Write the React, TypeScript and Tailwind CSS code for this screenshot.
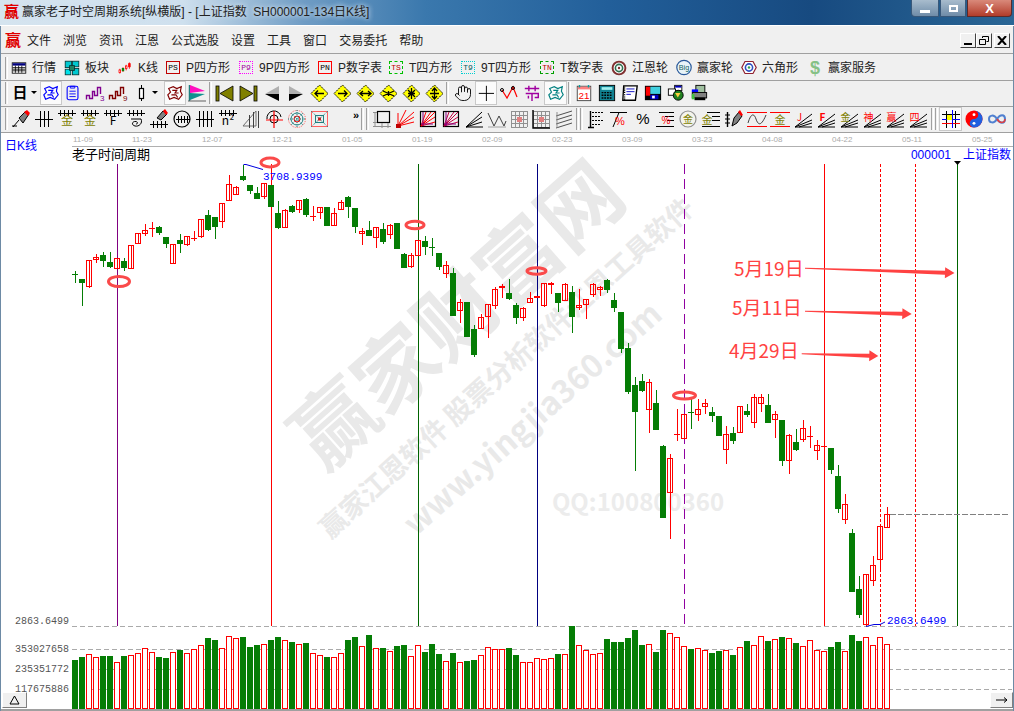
import type { ReactNode } from "react";
import { Hand } from "lucide-react";

const cjk = "Noto Sans CJK SC, sans-serif";

// [colour, wick top, body top, body bottom, wick bottom] in page y, x = 75 + 7i
type Candle = [string, number, number, number, number];
const candles: Candle[] = [
  ["g", 271, 274, 274, 283], ["g", 279, 279, 282, 306], ["r", 260, 260, 286, 288], ["r", 254, 257, 259, 263],
  ["g", 252, 255, 260, 267], ["g", 252, 262, 266, 268], ["r", 258, 258, 268, 268], ["g", 258, 261, 267, 271],
  ["r", 245, 245, 268, 269], ["r", 233, 233, 243, 244], ["r", 224, 230, 233, 236], ["r", 222, 228, 228, 237],
  ["g", 226, 227, 232, 235], ["g", 237, 237, 243, 248], ["r", 244, 244, 263, 264], ["g", 234, 240, 243, 253],
  ["r", 236, 236, 244, 246], ["r", 231, 238, 238, 241], ["r", 219, 219, 236, 238], ["g", 210, 215, 229, 231],
  ["g", 217, 217, 226, 239], ["r", 203, 203, 221, 228], ["r", 175, 184, 200, 201], ["r", 186, 187, 194, 195],
  ["g", 165, 176, 179, 181], ["g", 185, 185, 190, 194], ["g", 187, 193, 198, 199], ["r", 183, 183, 196, 199],
  ["g", 185, 185, 206, 206], ["g", 201, 213, 227, 229], ["r", 209, 210, 227, 228], ["g", 205, 206, 211, 213],
  ["r", 200, 200, 209, 213], ["g", 198, 199, 214, 217], ["r", 206, 216, 216, 221], ["r", 207, 207, 212, 219],
  ["g", 207, 207, 225, 226], ["r", 208, 213, 225, 226], ["r", 200, 202, 209, 210], ["g", 196, 197, 206, 218],
  ["g", 208, 208, 226, 233], ["r", 228, 231, 233, 245], ["g", 221, 230, 235, 236], ["r", 227, 227, 237, 248],
  ["g", 223, 229, 241, 244], ["r", 224, 225, 234, 239], ["g", 223, 223, 248, 248], ["g", 253, 254, 267, 268],
  ["r", 253, 255, 266, 268], ["r", 240, 240, 255, 255], ["g", 236, 241, 246, 255], ["g", 238, 247, 247, 256],
  ["g", 253, 253, 266, 270], ["r", 261, 265, 273, 278], ["g", 268, 273, 315, 315], ["r", 299, 302, 310, 323],
  ["g", 302, 302, 336, 337], ["g", 325, 329, 354, 357], ["r", 314, 317, 328, 328], ["r", 304, 304, 316, 338],
  ["r", 287, 289, 305, 309], ["r", 284, 286, 287, 298], ["g", 279, 293, 298, 300], ["g", 303, 305, 317, 324],
  ["r", 307, 308, 317, 321], ["r", 292, 298, 302, 303], ["r", 297, 296, 297, 297], ["r", 283, 283, 305, 307],
  ["r", 282, 283, 284, 294], ["g", 293, 293, 302, 312], ["r", 283, 284, 300, 300], ["g", 286, 292, 316, 333],
  ["r", 289, 305, 307, 310], ["r", 299, 299, 304, 319], ["r", 283, 284, 294, 297], ["r", 286, 287, 289, 296],
  ["g", 279, 280, 289, 293], ["g", 293, 300, 307, 312], ["g", 312, 312, 348, 353], ["g", 343, 348, 391, 394],
  ["g", 377, 385, 411, 471], ["g", 374, 381, 390, 392], ["r", 379, 382, 409, 433], ["g", 390, 403, 429, 429],
  ["g", 445, 446, 517, 517], ["r", 454, 458, 492, 539], ["r", 409, 434, 434, 441], ["r", 414, 414, 438, 438],
  ["g", 399, 412, 412, 429], ["r", 399, 409, 414, 421], ["r", 399, 403, 406, 414], ["g", 407, 412, 415, 422],
  ["g", 416, 416, 435, 436], ["r", 426, 434, 449, 464], ["g", 427, 433, 440, 444], ["r", 406, 406, 432, 432],
  ["g", 404, 411, 414, 417], ["r", 394, 397, 422, 428], ["r", 394, 397, 403, 412], ["g", 394, 405, 422, 422],
  ["r", 411, 414, 419, 438], ["g", 420, 420, 460, 466], ["r", 434, 435, 460, 474], ["g", 429, 442, 449, 451],
  ["r", 420, 428, 439, 442], ["r", 426, 436, 436, 448], ["r", 440, 445, 450, 460], ["r", 446, 446, 446, 446],
  ["g", 448, 448, 469, 474], ["g", 465, 476, 508, 513], ["r", 494, 504, 519, 524], ["g", 529, 533, 591, 591],
  ["g", 576, 589, 614, 618], ["r", 574, 574, 624, 626], ["r", 556, 565, 580, 586], ["r", 526, 526, 559, 569],
  ["r", 507, 514, 527, 528],
];

const volumes: [string, number][] = (
  "g660 g657 r654 r657 g656 g656 r662 g656 r655 r653 r648 r652 g657 g658 r652 g650 r653 r649 r645 g638 " +
  "g640 r648 r636 r638 g637 g647 g645 r644 g640 g637 r640 g642 r644 g643 r653 r655 g657 r657 r653 g640 " +
  "g637 r646 g635 r648 g648 r651 g646 g645 r656 r645 g652 g644 g654 r661 g653 r662 g661 g660 r655 r647 " +
  "r649 r649 g648 g655 r662 r662 r658 r659 r658 g654 r654 g626 r645 r650 r654 r653 g639 g642 g642 g638 " +
  "g630 g645 r644 g652 g630 r633 r637 r646 g649 r648 r650 g653 g651 r650 g655 r647 g641 r645 r636 g641 " +
  "r639 g637 r638 g643 r646 r640 r650 r651 g647 g642 r651 g635 g641 r637 r645 r637 r644"
)
  .split(" ")
  .map((v) => [v[0], Number(v.slice(1))]);

const GREEN = "#057d05";
const RED = "#ff0000";

function arrow(x1: number, y1: number, bx: number, by: number, tx: number, ty: number) {
  const len = Math.hypot(tx - x1, ty - y1);
  const nx = -(ty - y1) / len;
  const ny = (tx - x1) / len;
  const p = (x: number, y: number, d: number) => `${x + nx * d},${y + ny * d}`;
  return [p(x1, y1, 0.5), p(bx, by, 2), p(bx, by, 5.5), `${tx},${ty}`, p(bx, by, -5.5), p(bx, by, -2), p(x1, y1, -0.5)].join(" ");
}

const Ic = ({ children, size = 20 }: { children: ReactNode; size?: number }) => (
  <svg width={size} height={size} viewBox="0 0 20 20" fill="none" strokeWidth="1">
    {children}
  </svg>
);

// one toolbar cell
const S = ({ children, className = "w-[23px]" }: { children?: ReactNode; className?: string }) => (
  <div className={`h-[24px] shrink-0 flex items-center justify-center ${className}`}>{children}</div>
);

const Sel = ({ children, className = "w-[23px]" }: { children?: ReactNode; className?: string }) => (
  <div className={`h-[24px] shrink-0 flex items-center justify-center bg-[#fbfbfb] border border-[#c9c9c9] ${className}`}>{children}</div>
);

const Grip = ({ className = "" }: { className?: string }) => (
  <div className={`w-[3px] h-[22px] shrink-0 border-l border-l-[#a0a0a0] border-r border-r-white ${className}`} />
);

const Caret = () => <div className="w-0 h-0 border-x-[3px] border-x-transparent border-t-[3px] border-t-black" />;

// --- row one icons
const TableIcon = () => (
  <Ic size={18}>
    <rect x="1.5" y="3.5" width="17" height="13" fill="#fff" stroke="#000" />
    <rect x="2" y="4" width="16" height="3" fill="#000080" />
    <path d="M2 9.5H18M2 11.5H18M2 13.5H18M5.5 7V16M9.5 7V16M13.5 7V16" stroke="#000" />
  </Ic>
);
const BlocksIcon = () => (
  <Ic size={18}>
    <rect x="1.5" y="1.5" width="8" height="8" fill="#00c8d0" stroke="#003030" />
    <rect x="10.5" y="1.5" width="8" height="7" fill="#00c8d0" stroke="#003030" />
    <rect x="1.5" y="11.5" width="7" height="7" fill="#00e0e8" stroke="#003030" />
    <rect x="10.5" y="10.5" width="8" height="8" fill="#00c8d0" stroke="#003030" />
    <rect x="7" y="7" width="6" height="6" fill="#208060" stroke="#003030" />
  </Ic>
);
const KIcon = () => (
  <Ic size={18}>
    <path d="M3.5 11V17M7.5 9V15M11.5 6V13M15.5 3V11" stroke="#ff0000" />
    <rect x="2.5" y="12.5" width="2" height="3" fill="#fff" stroke="#ff0000" />
    <rect x="6.5" y="10.5" width="2" height="3" fill="#008000" stroke="#008000" />
    <rect x="10.5" y="7.5" width="2" height="3" fill="#fff" stroke="#ff0000" />
    <rect x="14.5" y="4.5" width="2" height="4" fill="#ff0000" stroke="#ff0000" />
  </Ic>
);
const TagIcon = ({ label, border, text }: { label: string; border: string; text: string }) => (
  <div className={`w-[14px] h-[13px] shrink-0 flex items-center justify-center border text-[8px] leading-none font-['Liberation_Mono',monospace] ${border} ${text}`}>
    {label}
  </div>
);
const WheelIcon = () => (
  <Ic size={16}>
    <circle cx="10" cy="10" r="8" fill="#fff" stroke="#803030" strokeWidth="2.4" />
    <circle cx="10" cy="10" r="4.5" stroke="#307050" strokeWidth="2" />
    <circle cx="10" cy="10" r="1.5" fill="#803030" />
  </Ic>
);
const BigIcon = () => (
  <svg width="17" height="17" viewBox="0 0 20 20" fill="none">
    <circle cx="10" cy="10" r="9" fill="#e8f4f8" stroke="#28589a" strokeWidth="1.5" />
    <text x="10" y="13" textAnchor="middle" fontSize="9" fill="#106060" fontFamily="Liberation Sans">
      Big
    </text>
  </svg>
);
const HexIcon = () => (
  <Ic size={17}>
    <polygon points="5,2.5 15,2.5 19,10 15,17.5 5,17.5 1,10" fill="#fff" stroke="#902030" strokeWidth="1.5" />
    <circle cx="10" cy="10" r="4.5" stroke="#3050c0" strokeWidth="2" />
    <circle cx="10" cy="10" r="1.5" fill="#30a050" />
  </Ic>
);

// --- row two icons
const MapIcon = ({ color }: { color: string }) => (
  <Ic size={18}>
    <path d="M3 5L8 3L12 5L17 3L16 8L18 12L14 17L9 15L4 17L2 12L5 9Z M7 7H12L10 10H14M6 12H11L13 15" stroke={color} strokeWidth="1.3" />
  </Ic>
);
const ClipIcon = () => (
  <Ic size={18}>
    <rect x="3.5" y="2.5" width="12" height="15" rx="2" stroke="#0000ff" strokeWidth="1.2" />
    <path d="M7 2.5H12V4.5H7ZM6 8H13M6 11H13M6 14H13" stroke="#0000ff" />
  </Ic>
);
const StepIcon = ({ color, n }: { color: string; n: string }) => (
  <svg width="20" height="20" viewBox="0 0 20 20" fill="none">
    <path d="M1.5 16.5V12.5H4.5V15.5H7.5V8.5H9.5V12.5H12.5V4.5H15.5V11" stroke={color} strokeWidth="1.4" />
    <text x="15" y="18" fontSize="8" fill={color} fontFamily="Liberation Sans">
      {n}
    </text>
  </svg>
);
const CandleIcon = () => (
  <Ic>
    <path d="M10.5 2V18" stroke="#000" />
    <rect x="8.5" y="5.5" width="4" height="10" fill="#fff" stroke="#000" strokeWidth="1.2" />
  </Ic>
);
const FlagIcon = () => (
  <Ic>
    <path d="M2.5 2V18" stroke="#208080" strokeWidth="1.5" />
    <polygon points="3,2 18,8 3,10" fill="#ff10c0" />
    <polygon points="3,10 18,11 3,17" fill="#109090" />
    <path d="M1 18H19" stroke="#606060" />
  </Ic>
);
const FirstIcon = ({ flip }: { flip?: boolean }) => (
  <Ic>
    <g transform={flip ? "matrix(-1 0 0 1 20 0)" : undefined}>
      <rect x="1" y="3" width="3" height="15" fill="#808000" stroke="#000" strokeWidth="0.8" />
      <polygon points="18,3 18,18 5,10.5" fill="#808000" stroke="#000" strokeWidth="0.8" />
    </g>
  </Ic>
);
const PlayIcon = ({ flip }: { flip?: boolean }) => (
  <Ic>
    <g transform={flip ? "matrix(-1 0 0 1 20 0)" : undefined}>
      <polygon points="17,3 17,11 3,11" fill="#b0b0b0" />
      <polygon points="17,18 17,11 3,11" fill="#000" />
    </g>
  </Ic>
);
const Diamond = ({ d }: { d: string }) => (
  <Ic>
    <polygon points="10.5,2 19,10.5 10.5,19 2,10.5" fill="#ffff00" stroke="#000" strokeDasharray="2 1" />
    <path d={d} stroke="#000" strokeWidth="1.3" />
  </Ic>
);
const diamonds = [
  "M6 10.5H15M9 7.5L6 10.5L9 13.5",
  "M6 10.5H15M12 7.5L15 10.5L12 13.5",
  "M5 10.5H16M8 8L5 10.5L8 13M13 8L16 10.5L13 13",
  "M5 8L16 13M5 13L16 8M10.5 8V13",
  "M10.5 5V16M7 10.5H14M7 7L14 14M14 7L7 14",
  "M10.5 5V16M8 8L10.5 5L13 8M8 13L10.5 16L13 13M6 10.5H15",
];
const VIcon = () => (
  <Ic>
    <path d="M3 7L8 15L14 4L18 14" stroke="#ff0000" strokeWidth="1.2" />
    <circle cx="3" cy="7" r="1.5" stroke="#000" />
    <circle cx="14" cy="5" r="1.5" stroke="#000" />
  </Ic>
);
const JieIcon = () => (
  <Ic size={18}>
    <path d="M2 5H18M6.5 2V8M13.5 2V8M3 10.5H17V15H13M10 10.5V19M6 13V16" stroke="#a000a0" strokeWidth="1.6" />
  </Ic>
);
const CalIcon = () => (
  <svg width="18" height="18" viewBox="0 0 20 20" fill="none">
    <rect x="2.5" y="2.5" width="15" height="16" fill="#fff" stroke="#404040" />
    <rect x="3" y="3" width="14" height="3" fill="#ff8080" />
    <path d="M5 1V4M15 1V4" stroke="#00a0a0" strokeWidth="1.5" />
    <text x="10" y="16.5" textAnchor="middle" fontSize="11" fill="#ff0000" fontFamily="Liberation Sans">
      21
    </text>
  </svg>
);
const CalcIcon = () => (
  <Ic size={18}>
    <rect x="1.5" y="1.5" width="17" height="17" fill="#108090" stroke="#000" />
    <rect x="4" y="3.5" width="12" height="3" fill="#a0f0f0" />
    <path d="M4 9.5H16M4 12.5H16M4 15.5H16" stroke="#000" strokeWidth="1.5" strokeDasharray="2 1" />
  </Ic>
);
const DocIcon = () => (
  <Ic size={18}>
    <polygon points="3,2 18,2 16,18 2,18" fill="#fff" stroke="#000" strokeWidth="1.5" />
    <path d="M6 5.5H15M6 8.5H15M6 11.5H11" stroke="#0000c0" />
    <path d="M4 3V18" stroke="#000" strokeDasharray="1 1" strokeWidth="1.5" />
  </Ic>
);
const SaveIcon = () => (
  <Ic size={18}>
    <rect x="1" y="2" width="18" height="16" fill="#000" />
    <rect x="2" y="3" width="5" height="10" fill="#ff0000" />
    <rect x="7" y="3" width="11" height="8" fill="#40d0e0" />
    <rect x="7" y="12" width="9" height="5" fill="#0000c0" />
    <rect x="9" y="13" width="3" height="3" fill="#fff" />
  </Ic>
);
const GlobeIcon = () => (
  <Ic size={18}>
    <rect x="8.5" y="1.5" width="8" height="6" fill="#fff" stroke="#000" />
    <rect x="9" y="2" width="7" height="2" fill="#0000c0" />
    <rect x="1.5" y="5.5" width="8" height="7" fill="#fff" stroke="#000" />
    <circle cx="12.5" cy="12.5" r="5.5" fill="#208020" stroke="#000" />
    <path d="M9 10H15L12 15Z" fill="#ffd040" />
  </Ic>
);
const PrinterIcon = () => (
  <Ic size={18}>
    <rect x="6.5" y="1.5" width="10" height="9" fill="#a0c0a0" stroke="#000" />
    <rect x="2" y="6" width="7" height="3" fill="#0000ff" />
    <rect x="2.5" y="9.5" width="16" height="6" fill="#808080" stroke="#000" />
    <rect x="5" y="15" width="12" height="3" fill="#000" />
    <rect x="2" y="11" width="3" height="6" fill="#40c040" />
  </Ic>
);

// --- row three icons
const PencilIcon = () => (
  <Ic>
    <polygon points="8,9 15,2 18,5 12,14" fill="#808080" stroke="#000" />
    <polygon points="13,3 16,1 19,4 17,7" fill="#ff0000" />
    <path d="M2 18L8 11M1 17H6" stroke="#000" />
  </Ic>
);
const Comb = ({ n = 3, y = 10, h = 8 }: { n?: number; y?: number; h?: number }) => {
  const xs = Array.from({ length: n }, (_, i) => 10 - ((n - 1) * 4) / 2 + i * 4);
  return <path d={`M1 ${y + 0.5}H19 ${xs.map((x) => `M${x + 0.5} ${y - h}V${y + h}`).join(" ")}`} stroke="#000" />;
};
const CombLabel = ({ label, color = "#000", size = 10 }: { label: string; color?: string; size?: number }) => (
  <svg width="20" height="20" viewBox="0 0 20 20" fill="none" strokeWidth="1">
    <path d="M1 4.5H19M3.5 1V7M7.5 1V7M11.5 1V7M15.5 1V7" stroke="#000" />
    <text x="10" y="16" textAnchor="middle" fontSize={size} fill={color} fontFamily={cjk}>
      {label}
    </text>
  </svg>
);
const SpiralIcon = () => (
  <Ic>
    <path d="M1 4.5H19M3.5 1V7M7.5 1V7M11.5 1V7M15.5 1V7" stroke="#000" />
    <path d="M5 10H15C17 14 13 18 9 17C5 16 6 12 10 12.5C12 13 12 15 10 15" stroke="#000" />
  </Ic>
);
const PencilComb = () => (
  <Ic>
    <polygon points="8,9 14,2 18,5 12,11" fill="#808080" stroke="#000" />
    <polygon points="14,2 16,0 19,4 17,6" fill="#ff0000" />
    <path d="M1 15.5H19M4.5 12V19M8.5 12V19M12.5 12V19M16.5 12V19" stroke="#000" />
  </Ic>
);
const CircleComb = () => (
  <Ic>
    <circle cx="10" cy="10" r="8" stroke="#000" strokeWidth="1.2" />
    <path d="M4 10.5H18M6.5 7V14M9.5 7V14M12.5 7V14M15.5 7V14" stroke="#000" />
  </Ic>
);
const TriLines = () => (
  <Ic>
    <polygon points="2,17 15,2 15,17" stroke="#707070" />
    <path d="M8.5 6V19M12.5 3V19M17.5 2V19" stroke="#404040" />
  </Ic>
);
const Target = () => (
  <Ic>
    <circle cx="10" cy="10" r="4" stroke="#000" />
    <path d="M3 10A7 7 0 0 1 17 8" stroke="#000" />
    <path d="M10 2V19M2 11H19" stroke="#ff0000" strokeWidth="1.2" />
  </Ic>
);
const Web = () => (
  <Ic>
    <circle cx="10" cy="10" r="3" stroke="#ff0000" />
    <circle cx="10" cy="10" r="6" stroke="#208080" />
    <circle cx="10" cy="10" r="8.5" stroke="#ff6060" strokeDasharray="1 1" />
    <path d="M1 10H19M10 1V19M4 4L16 16M16 4L4 16" stroke="#208080" strokeDasharray="1 1" />
  </Ic>
);
const SquareWeb = () => (
  <Ic>
    <rect x="1.5" y="2.5" width="16" height="15" stroke="#ff6060" />
    <rect x="5.5" y="6.5" width="8" height="7" stroke="#208080" />
    <rect x="8" y="8.5" width="3" height="3" fill="#ff0000" />
    <path d="M1 2L18 18M18 2L1 18" stroke="#208080" strokeDasharray="1 1" />
  </Ic>
);
const BoxFeet = () => (
  <Ic>
    <rect x="5.5" y="2.5" width="12" height="11" stroke="#000" strokeWidth="1.2" />
    <path d="M1 3.5H5M1 13.5H5M3 3V17M1 17.5H19M10 14V19M16 14V19" stroke="#909090" />
  </Ic>
);
const RedFan = () => (
  <Ic>
    <path d="M3 17L19 3M3 17L19 8M3 17L19 13M3 17L11 1M3 17V4" stroke="#ff0000" />
    <path d="M1 15H6V19H1Z" fill="#c00000" />
  </Ic>
);
const BoxFan = ({ c1, c2 }: { c1: string; c2: string }) => (
  <Ic>
    <rect x="2.5" y="2.5" width="15" height="15" stroke="#000" strokeWidth="1.2" />
    <path d="M3 17L17 3M3 17L17 8M3 17L17 13M3 17L8 3M3 17L13 3" stroke={c1} />
    <path d="M3 15H15M5 3V17" stroke={c2} />
  </Ic>
);
const BlackFan = () => (
  <Ic>
    <path d="M2 18L18 3M2 18L18 8M2 18L18 13M2 18H19" stroke="#000" />
  </Ic>
);
const VLines = () => (
  <Ic>
    <path d="M1 4L7 17L12 7L17 17L19 12" stroke="#404040" />
    <path d="M1 18H19" stroke="#a0a0a0" />
  </Ic>
);
const Grid = ({ dark }: { dark?: boolean }) => (
  <Ic>
    <path
      d="M2.5 2V18M6.5 2V18M10.5 2V18M14.5 2V18M18.5 2V18M2 2.5H18M2 6.5H18M2 10.5H18M2 14.5H18M2 18.5H18"
      stroke="#909090"
    />
    <rect x="8" y="8" width="5" height="5" fill="#e08080" />
    {dark && <path d="M2 1V19H19" stroke="#000" strokeWidth="1.4" />}
  </Ic>
);
const Slant = () => (
  <Ic>
    <path d="M2 7L18 2M2 11L18 6M2 15L18 10M2 19L18 14" stroke="#505050" />
    <path d="M3 3V19" stroke="#909090" />
  </Ic>
);
const Ladder = () => (
  <Ic>
    <path d="M4.5 2V18M2 18.5H8" stroke="#000" strokeWidth="1.4" />
    <path d="M6 3.5H18M6 7.5H14M6 11.5H18M6 15.5H14" stroke="#000" strokeDasharray="2 1" />
  </Ic>
);
const PctRule = ({ rule, size = 11, color = "#ff0000", y = 16 }: { rule: string; size?: number; color?: string; y?: number }) => (
  <svg width="20" height="20" viewBox="0 0 20 20" fill="none">
    {rule && <path d={rule} stroke="#000" />}
    <text x="11" y={y} textAnchor="middle" fontSize={size} fill={color} fontFamily="Liberation Sans">
      %
    </text>
  </svg>
);
const RingGold = () => (
  <svg width="20" height="20" viewBox="0 0 20 20" fill="none">
    <circle cx="10" cy="10" r="8" fill="#f4f4ec" stroke="#909090" strokeWidth="1.2" />
    <text x="10" y="14" textAnchor="middle" fontSize="10" fill="#808000" fontFamily={cjk}>
      金
    </text>
  </svg>
);
const GoldRule = () => (
  <svg width="20" height="20" viewBox="0 0 20 20" fill="none">
    <path d="M6 3.5H19M11 7.5H19M11 11.5H19M1 17.5H19" stroke="#000" />
    <text x="6" y="15" textAnchor="middle" fontSize="11" fill="#808000" fontFamily={cjk}>
      金
    </text>
  </svg>
);
const PencilLadder = () => (
  <Ic>
    <path d="M3.5 3V18" stroke="#000" strokeWidth="1.4" />
    <path d="M1 6H6M1 10H6M1 14H6" stroke="#000" />
    <polygon points="8,17 10,9 15,3 18,7 13,14" fill="#808080" stroke="#000" />
    <polygon points="14,3 16,1 19,6 17,7" fill="#ff0000" />
  </Ic>
);
const WaveRule = () => (
  <Ic>
    <path d="M0 3.5H20M0 17.5H20" stroke="#ff0000" />
    <path d="M1 14C4 4 7 4 9 10S14 18 19 6" stroke="#404040" />
  </Ic>
);
const GoldRed = () => (
  <svg width="20" height="20" viewBox="0 0 20 20" fill="none">
    <path d="M0 3.5H20M0 17.5H20" stroke="#ff0000" />
    <text x="10" y="15" textAnchor="middle" fontSize="11" fill="#808000" fontFamily={cjk}>
      金
    </text>
  </svg>
);
const Fan = ({ label, color, bold, size = 10 }: { label: string; color: string; bold?: boolean; size?: number }) => (
  <svg width="20" height="20" viewBox="0 0 20 20" fill="none">
    <path d="M2 18L19 5M2 18L19 11M2 18H19M6 18L19 14" stroke="#000" />
    <text x="6.5" y="12" textAnchor="middle" fontSize={size} fontWeight={bold ? 700 : 400} fill={color} fontFamily={cjk}>
      {label}
    </text>
  </svg>
);
const GridSel = () => (
  <Ic>
    <path d="M5.5 2V19M14.5 2V19M1 5.5H19" stroke="#000" />
    <path d="M1 14.5H19" stroke="#ff0000" />
    <path d="M11.5 1V19M1 10.5H19" stroke="#0000ff" />
    <rect x="6" y="6" width="5" height="5" fill="#ffff00" />
  </Ic>
);
const YinYang = () => (
  <svg width="18" height="18" viewBox="0 0 20 20">
    <circle cx="10" cy="10" r="9.5" fill="#ff0000" />
    <path d="M10 .5A9.5 9.5 0 0 1 10 19.5A4.75 4.75 0 0 1 10 10A4.75 4.75 0 0 0 10 .5Z" fill="#2060e0" />
    <circle cx="10" cy="5.2" r="1.6" fill="#fff" />
    <circle cx="10" cy="14.8" r="1.6" fill="#fff" />
  </svg>
);
const Infinity8 = () => (
  <Ic>
    <path d="M10 10C7 5 2 6 2 10S7 15 10 10S18 5 18 10S13 15 10 10Z" stroke="#5080d0" strokeWidth="2" />
    <path d="M10 10C13 15 18 14 18 10" stroke="#e04040" strokeWidth="1.5" />
  </Ic>
);

const Btn = ({ children }: { children: ReactNode }) => (
  <div className="w-[16px] h-[15px] flex items-center justify-center bg-[#f0f0f0] border border-t-white border-l-white border-r-[#404040] border-b-[#404040]">
    {children}
  </div>
);

const menuItems = ["文件", "浏览", "资讯", "江恩", "公式选股", "设置", "工具", "窗口", "交易委托", "帮助"];
const dates = ["11-23", "12-07", "12-21", "01-05", "01-19", "02-09", "02-23", "03-09", "03-23", "04-08", "04-22", "05-11", "05-25"];

const Item = ({ icon, label, className }: { icon: ReactNode; label: string; className: string }) => (
  <div className={`flex items-center shrink-0 ${className}`}>
    <div className="w-[16px] h-[18px] flex items-center justify-center mr-[5px]">{icon}</div>
    <span>{label}</span>
  </div>
);

export default function App() {
  return (
    <div className="w-[1014px] h-[711px] flex flex-col overflow-hidden text-[12px] leading-none text-[#222] font-['Liberation_Sans','Noto_Sans_CJK_SC',sans-serif]">
      {/* title bar */}
      <div className="h-[26px] shrink-0 flex justify-between bg-[linear-gradient(90deg,#d5e4ef_0%,#cfe0ee_18%,#6f9cc4_30%,#3a78ad_42%,#225f9a_60%,#174a80_80%,#2a6695_100%)] border-b border-white">
        <div className="flex items-center pl-[4px] pb-[2px]">
          <span className="w-[18px] text-[15px] font-bold text-[#e00000]">赢</span>
          <span className="whitespace-pre [text-shadow:0_0_5px_#cfdfee,0_0_5px_#cfdfee]">赢家老子时空周期系统[纵横版] - [上证指数  SH000001-134日K线]</span>
        </div>
        <div className="flex h-[17px] mr-[2px] gap-px">
          <div className="w-[28px] flex items-center justify-center rounded-bl-[4px] border border-t-0 border-[#38587a] bg-[linear-gradient(#a8bccd,#6f8ca8)]">
            <div className="w-[10px] h-[3px] mt-[6px] bg-white" />
          </div>
          <div className="w-[26px] flex items-center justify-center border border-t-0 border-[#38587a] bg-[linear-gradient(#a8bccd,#6f8ca8)]">
            <div className="w-[9px] h-[7px] border-2 border-white" />
          </div>
          <div className="w-[45px] flex items-center justify-center rounded-br-[4px] border border-t-0 border-[#5a2a2a] bg-[linear-gradient(#d9897a,#b23c2a)] text-white font-bold text-[13px]">
            X
          </div>
        </div>
      </div>

      {/* window client */}
      <div className="flex-1 flex flex-col border-x border-x-[#6d8aa5] bg-[#f0f0f0]">
        {/* menu */}
        <div className="h-[28px] shrink-0 flex items-center border-b border-[#a0a0a0] pt-[2px] pl-[4px] pr-[3px]">
          <span className="w-[22px] text-[16px] font-bold text-[#e00000]">赢</span>
          <div className="flex gap-3">
            {menuItems.map((m) => (
              <span key={m}>{m}</span>
            ))}
          </div>
          <div className="ml-auto flex items-center">
            <Btn>
              <div className="w-[8px] h-[2px] mt-[7px] bg-black" />
            </Btn>
            <Btn>
              <svg width="10" height="9" viewBox="0 0 10 9" fill="none" stroke="#000">
                <path d="M3.5 2V.5H9.5V5.5H7.5M.5 3.5H6.5V8.5H.5Z" />
              </svg>
            </Btn>
            <div className="w-[2px]" />
            <Btn>
              <svg width="10" height="9" viewBox="0 0 10 9" stroke="#000" strokeWidth="2">
                <path d="M1 0L9 9M9 0L1 9" />
              </svg>
            </Btn>
          </div>
        </div>

        {/* toolbar one */}
        <div className="h-[27px] shrink-0 flex items-center border-b border-[#a0a0a0] pt-[1px] pl-[4px]">
          <Grip className="mr-[3px]" />
          <Item className="w-[53px]" icon={<TableIcon />} label="行情" />
          <Item className="w-[53px]" icon={<BlocksIcon />} label="板块" />
          <Item className="w-[48px]" icon={<KIcon />} label="K线" />
          <Item className="w-[73px]" icon={<TagIcon label="PS" border="border-[#c00000]" text="text-black" />} label="P四方形" />
          <Item className="w-[79px]" icon={<TagIcon label="P9" border="border-dotted border-[#ff00ff]" text="text-[#a000a0]" />} label="9P四方形" />
          <Item className="w-[71px]" icon={<TagIcon label="PN" border="border-[#ff0000]" text="text-black" />} label="P数字表" />
          <Item className="w-[72px]" icon={<TagIcon label="TS" border="border-dashed border-[#00c000]" text="text-[#c00000]" />} label="T四方形" />
          <Item className="w-[79px]" icon={<TagIcon label="T9" border="border-dotted border-[#00d0d0]" text="text-[#006060]" />} label="9T四方形" />
          <Item className="w-[72px]" icon={<TagIcon label="TN" border="border-dashed border-[#00a000]" text="text-[#c00000]" />} label="T数字表" />
          <Item className="w-[65px]" icon={<WheelIcon />} label="江恩轮" />
          <Item className="w-[65px]" icon={<BigIcon />} label="赢家轮" />
          <Item className="w-[66px]" icon={<HexIcon />} label="六角形" />
          <Item
            className="w-[70px]"
            icon={<span className="text-[18px] font-bold text-[#86c186] font-['Liberation_Sans']">$</span>}
            label="赢家服务"
          />
        </div>

        {/* toolbar two */}
        <div className="h-[26px] shrink-0 flex items-center border-b border-[#a0a0a0] pb-[2px] pl-[4px]">
          <Grip className="mr-[1px]" />
          <S className="w-[22px]">
            <span className="text-[15px] font-bold text-black">日</span>
          </S>
          <S className="w-[6px] mr-[3px]">
            <Caret />
          </S>
          <Sel className="w-[22px]">
            <MapIcon color="#0000ff" />
          </Sel>
          <S className="w-[21px]">
            <ClipIcon />
          </S>
          <S>
            <StepIcon color="#800090" n="3" />
          </S>
          <S>
            <StepIcon color="#800000" n="9" />
          </S>
          <S>
            <CandleIcon />
          </S>
          <S className="w-[6px] mr-[6px]">
            <Caret />
          </S>
          <Sel className="w-[22px]">
            <MapIcon color="#800000" />
          </Sel>
          <S className="w-[22px]">
            <FlagIcon />
          </S>
          <Grip className="mx-[1px]" />
          <S>
            <FirstIcon />
          </S>
          <S>
            <FirstIcon flip />
          </S>
          <S className="w-[24px] ml-px">
            <PlayIcon />
          </S>
          <S>
            <PlayIcon flip />
          </S>
          {diamonds.map((d) => (
            <S key={d}>
              <Diamond d={d} />
            </S>
          ))}
          <Grip className="mx-[1px]" />
          <S className="w-[25px]">
            <Hand size={18} strokeWidth={1.2} color="#000" />
          </S>
          <Sel className="w-[22px]">
            <Ic size={16}>
              <path d="M10.5 1V20M1 10.5H20" stroke="#000" strokeWidth="1.2" />
            </Ic>
          </Sel>
          <S className="w-[24px]">
            <VIcon />
          </S>
          <S className="w-[21px]">
            <JieIcon />
          </S>
          <Sel className="w-[23px] ml-[2px]">
            <MapIcon color="#008080" />
          </Sel>
          <Grip className="mx-[1px]" />
          <S>
            <CalIcon />
          </S>
          <S>
            <CalcIcon />
          </S>
          <S>
            <DocIcon />
          </S>
          <S>
            <SaveIcon />
          </S>
          <S>
            <GlobeIcon />
          </S>
          <S>
            <PrinterIcon />
          </S>
        </div>

        {/* toolbar three */}
        <div className="h-[26px] shrink-0 flex items-center border-b border-[#a0a0a0] pb-[2px] pl-[4px]">
          <Grip className="mr-[1px]" />
          <S>
            <PencilIcon />
          </S>
          <S>
            <Ic>
              <Comb n={3} />
            </Ic>
          </S>
          <S>
            <CombLabel label="金" color="#808000" size={12} />
          </S>
          <S>
            <CombLabel label="金" color="#808000" size={12} />
          </S>
          <S>
            <CombLabel label="F" size={12} />
          </S>
          <S>
            <SpiralIcon />
          </S>
          <S>
            <PencilComb />
          </S>
          <S>
            <CircleComb />
          </S>
          <S>
            <Ic>
              <Comb n={4} />
            </Ic>
          </S>
          <S>
            <CombLabel label="n²" size={12} />
          </S>
          <S>
            <TriLines />
          </S>
          <S>
            <Target />
          </S>
          <S>
            <Web />
          </S>
          <S>
            <SquareWeb />
          </S>
          <div className="w-[29px] h-[24px] flex items-start justify-end pt-[3px] pr-[1px] text-[11px] font-bold text-black shrink-0">»</div>
          <Grip className="ml-[1px] mr-[2px]" />
          <Grip className="mr-[1px]" />
          <S>
            <BoxFeet />
          </S>
          <S>
            <RedFan />
          </S>
          <S>
            <BoxFan c1="#ff0000" c2="#800080" />
          </S>
          <S>
            <BoxFan c1="#c00040" c2="#800080" />
          </S>
          <S>
            <BlackFan />
          </S>
          <S>
            <VLines />
          </S>
          <S className="w-[21px]">
            <Grid />
          </S>
          <S>
            <Grid dark />
          </S>
          <S>
            <Slant />
          </S>
          <Grip className="mx-[1px]" />
          <Grip className="mr-[1px]" />
          <S>
            <Ladder />
          </S>
          <S>
            <PctRule rule="M1 3.5H18M4 18L10 3.5" />
          </S>
          <S>
            <PctRule rule="" color="#000" size={15} y={15} />
          </S>
          <S>
            <PctRule rule="M4 3.5H19M10 7.5H19M12 11.5H19M1 17.5H19" size={10} y={15} />
          </S>
          <S>
            <RingGold />
          </S>
          <S>
            <GoldRule />
          </S>
          <S>
            <PencilLadder />
          </S>
          <S>
            <WaveRule />
          </S>
          <S>
            <GoldRed />
          </S>
          <S>
            <Fan label="J" color="#ff0000" />
          </S>
          <S>
            <Fan label="F" color="#ff0000" bold />
          </S>
          <S>
            <Fan label="金" color="#808000" />
          </S>
          <S>
            <Fan label="神" color="#ff0000" />
          </S>
          <S>
            <Fan label="赢" color="#ff0000" />
          </S>
          <S>
            <Fan label="四" color="#ff0000" />
          </S>
          <Grip className="ml-[2px]" />
          <Grip className="mx-[1px]" />
          <Sel className="w-[23px]">
            <GridSel />
          </Sel>
          <S>
            <YinYang />
          </S>
          <S>
            <Infinity8 />
          </S>
        </div>

        {/* date axis */}
        <div className="h-[14px] shrink-0 flex bg-white relative z-10">
          <div className="w-[71px] shrink-0 pl-[4px] pt-[7px] text-[12px] text-[#0000ff] whitespace-nowrap">日K线</div>
          <div className="flex-1 min-w-0 flex border-b border-[#b0b0b0] pt-[3px] text-[8px] text-[#aaa] font-['Liberation_Sans']">
            <span className="w-[60px] shrink-0 pl-px">11-09</span>
            {dates.map((d) => (
              <span key={d} className="w-[70px] last:w-[40px] shrink-0">
                {d}
              </span>
            ))}
          </div>
        </div>

        {/* chart */}
        <div className="flex-1 relative bg-white border-b-2 border-[#a0a0a0]">
          <svg className="block w-[1012px] h-[562px] overflow-visible" viewBox="1 147 1012 562" fill="none">
            {/* watermarks */}
            <g fill="#e9e9e9" fontWeight="700" textAnchor="middle" fontFamily={cjk}>
              <text transform="translate(477 337) rotate(-41.6)" fontSize="82">赢家财富网</text>
              <text transform="translate(513 375) rotate(-42)" fontSize="27" xmlSpace="preserve">赢家江恩软件 股票分析软件江恩工具软件</text>
              <text transform="translate(540 427) rotate(-41.5)" fontSize="32">www.yingjia360.com</text>
              <text x="638" y="511" fontSize="24" fill="#ececec">QQ:100800360</text>
            </g>

            {/* dashed scale lines */}
            <g stroke="#aaa" strokeDasharray="5 3" shapeRendering="crispEdges">
              <path d="M72 626.5H1012" />
              <path d="M72 649.5H1012" />
              <path d="M72 669.5H1012" />
              <path d="M72 689.5H1012" />
            </g>

            {/* time lines */}
            <g shapeRendering="crispEdges">
              <path d="M117.5 164V626" stroke="#800080" />
              <path d="M271.5 164V626" stroke="#ff0000" />
              <path d="M418.5 164V626" stroke="#006400" />
              <path d="M537.5 164V626" stroke="#000080" />
              <path d="M684.5 164V626" stroke="#9000a0" strokeDasharray="10 5" />
              <path d="M824.5 164V626" stroke="#ff0000" />
              <path d="M880.5 164V626" stroke="#ff0000" strokeDasharray="3 2" />
              <path d="M915.5 164V626" stroke="#ff0000" strokeDasharray="3 2" />
              <path d="M957.5 161V626" stroke="#006400" />
              <path d="M890 514.5H1009" stroke="#808080" strokeDasharray="6 2" />
            </g>

            {/* candles */}
            <g shapeRendering="crispEdges">
              {candles.map(([c, wt, bt, bb, wb], i) => {
                const x = 75 + 7 * i;
                const col = c === "g" ? GREEN : RED;
                return (
                  <g key={i}>
                    {wt < wb && <path d={`M${x + 0.5} ${wt}V${wb}`} stroke={col} />}
                    {bt === bb ? (
                      <path d={`M${x - 3} ${bt + 0.5}H${x + 3}`} stroke={col} />
                    ) : c === "g" ? (
                      <rect x={x - 3} y={bt} width="6" height={bb - bt + 1} fill={col} />
                    ) : (
                      <rect x={x - 2.5} y={bt + 0.5} width="5" height={bb - bt} stroke={col} />
                    )}
                  </g>
                );
              })}
            </g>

            {/* volume */}
            <g shapeRendering="crispEdges">
              {volumes.map(([c, top], i) => {
                const x = 75 + 7 * i;
                return c === "g" ? (
                  <rect key={i} x={x - 3} y={top} width="6" height={709 - top} fill={GREEN} />
                ) : (
                  <rect key={i} x={x - 2.5} y={top + 0.5} width="5" height={708 - top} stroke={RED} fill="#fff" />
                );
              })}
            </g>

            {/* ovals */}
            <g stroke="#fa4a4a" strokeWidth="3">
              <ellipse cx="119" cy="281.5" rx="10.5" ry="5" />
              <ellipse cx="270" cy="162.5" rx="9" ry="4.5" />
              <ellipse cx="415" cy="225" rx="9" ry="3.8" />
              <ellipse cx="536.5" cy="271" rx="9.5" ry="3.2" />
              <ellipse cx="684.5" cy="395.5" rx="11" ry="3.6" />
            </g>

            {/* high and low marks */}
            <path d="M243.5 164.5H246L263 169.5" stroke="#0000e0" />
            <path d="M866 626.5L874 624.5H880L885 622" stroke="#0000e0" />
            <g fontFamily="Liberation Mono" fontSize="11" fill="#0000ff">
              <text x="263" y="180">3708.9399</text>
              <text x="887" y="624">2863.6499</text>
            </g>

            {/* scale labels */}
            <g fontFamily="Liberation Mono" fontSize="10" fill="#555">
              <text x="15" y="624">2863.6499</text>
              <text x="15" y="652">353027658</text>
              <text x="15" y="672">235351772</text>
              <text x="15" y="692">117675886</text>
            </g>

            {/* annotations */}
            <g fill="#ff4242">
              <polygon points={arrow(805, 268.3, 945, 272.7, 954.5, 273)} />
              <polygon points={arrow(805, 311.3, 902.3, 313.7, 911.7, 314)} />
              <polygon points={arrow(801.7, 353.7, 869.3, 355.7, 878.3, 356)} />
              <g fontFamily={cjk} fontSize="19">
                <text x="734" y="276">5月19日</text>
                <text x="732" y="315">5月11日</text>
                <text x="729" y="358">4月29日</text>
              </g>
            </g>

            <path d="M954 161H961L957.5 165Z" fill="#000" />
          </svg>

          {/* chart titles */}
          <span className="absolute left-[71px] top-[1px] text-[13px] text-black">老子时间周期</span>
          <div className="absolute right-[2px] top-[2px] flex gap-[12px] text-[12px] text-[#0000ff]">
            <span>000001</span>
            <span>上证指数</span>
          </div>

          {/* corner buttons */}
          <div className="absolute left-[1px] bottom-[1px] w-[25px] h-[16px] flex items-center justify-center bg-[#f0f0f0] border border-t-white border-l-white border-r-[#808080] border-b-[#808080]">
            <svg width="11" height="10" viewBox="0 0 11 10" fill="none" stroke="#000">
              <path d="M5.5 1L10 9H1Z" />
            </svg>
          </div>
          <div className="absolute right-[0px] bottom-[1px] w-[23px] h-[16px] flex items-center justify-center bg-[#f0f0f0] border border-t-white border-l-white border-r-[#808080] border-b-[#808080]">
            <svg width="12" height="8" viewBox="0 0 12 8" fill="none" stroke="#000">
              <path d="M0 4H11M8 1.5L11 4L8 6.5" />
            </svg>
          </div>
        </div>
      </div>
    </div>
  );
}
